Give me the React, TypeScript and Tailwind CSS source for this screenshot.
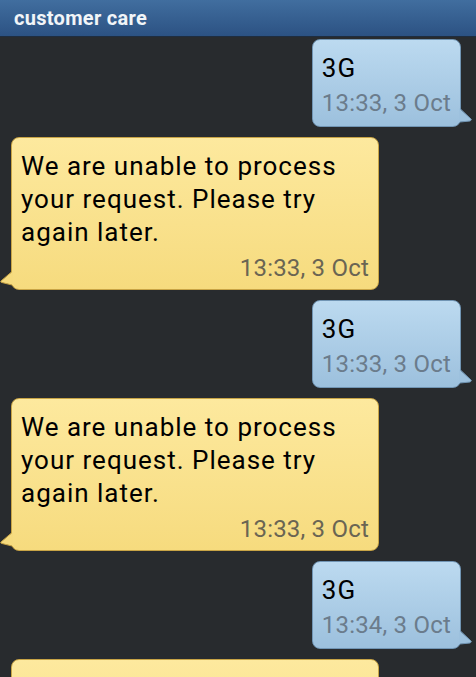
import React from "react";

type Msg = { out: boolean; text: string; time: string };

const msgs: Msg[] = [
  { out: true, text: "3G", time: "13:33, 3 Oct" },
  { out: false, text: "We are unable to process your request. Please try again later.", time: "13:33, 3 Oct" },
  { out: true, text: "3G", time: "13:33, 3 Oct" },
  { out: false, text: "We are unable to process your request. Please try again later.", time: "13:33, 3 Oct" },
  { out: true, text: "3G", time: "13:34, 3 Oct" },
  { out: false, text: "We are unable to process your request. Please try again later.", time: "13:34, 3 Oct" },
];

function OutBubble({ text, time }: { text: string; time: string }) {
  return (
    <div className="flex justify-end pr-[15px]">
      <div className="relative">
        <div className="rounded-[8px] border border-[#7195b4] bg-gradient-to-b from-[#bcdaf0] to-[#9cc0dd] pl-[9px] pr-[9px] pt-[12px] pb-[5px]">
          <div className="text-[26px] leading-[33px] tracking-[1px] text-black">{text}</div>
          <div className="mt-[1px] text-[24px] leading-[35px] tracking-[0.2px] text-[#6b7c8c]">{time}</div>
        </div>
        <svg className="absolute right-[-12px] bottom-[3px]" width="14" height="16" viewBox="0 0 14 16">
          <path d="M0 0 L12 11 Q13 12 11 13 L0 14 Z" fill="#9dc1de" />
          <path d="M1 0.5 L12 11 Q13 12 11 13 L1 14" fill="none" stroke="#7195b4" strokeWidth="1" />
        </svg>
      </div>
    </div>
  );
}

function InBubble({ text, time }: { text: string; time: string }) {
  return (
    <div className="flex justify-start pl-[11px]">
      <div className="relative">
        <div className="w-[368px] rounded-[8px] border border-[#c8a446] bg-gradient-to-b from-[#fde99e] to-[#f6db7e] pl-[9px] pr-[9px] pt-[12px] pb-[3px]">
          <div className="text-[26px] leading-[33px] tracking-[1px] text-black">{text}</div>
          <div className="mt-[2px] text-right text-[24px] leading-[35px] tracking-[0.2px] text-[#6a6553]">{time}</div>
        </div>
        <svg className="absolute left-[-11px] bottom-[3px]" width="13" height="16" viewBox="0 0 13 16">
          <path d="M13 0 L1 10 Q0 11 2 11.5 L13 14 Z" fill="#f6db7e" />
          <path d="M12 0.5 L1 10 Q0 11 2 11.5 L12 14" fill="none" stroke="#c8a446" strokeWidth="1" />
        </svg>
      </div>
    </div>
  );
}

export default function App() {
  return (
    <div
      className="h-[677px] w-[476px] overflow-hidden bg-[#282b2e]"
      style={{ fontFamily: "Roboto, 'Noto Sans', sans-serif" }}
    >
      <div className="h-[37px] border-b border-[#1e2d40] bg-gradient-to-b from-[#416e9f] to-[#2c5283] pl-[14px]">
        <div className="text-[20px] font-bold leading-[36px] tracking-[0.3px] text-[#f2f5f8]">customer care</div>
      </div>
      <div className="flex flex-col gap-[10px] pt-[2px]">
        {msgs.map((m, i) =>
          m.out ? <OutBubble key={i} text={m.text} time={m.time} /> : <InBubble key={i} text={m.text} time={m.time} />
        )}
      </div>
    </div>
  );
}
